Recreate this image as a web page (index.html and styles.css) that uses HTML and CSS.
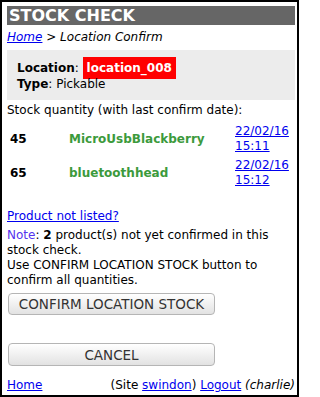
FILE: index.html
```html
<!DOCTYPE html>
<html>
<head>
<meta charset="utf-8">
<link rel="stylesheet" href="styles.css">
</head>
<body>
<div class="page">
  <h1 class="title">STOCK CHECK</h1>
  <div class="crumbs"><a href="#">Home</a> &gt; Location Confirm</div>
  <div class="locbox">
    <div><b>Location</b>: <span class="badge">location_008</span></div>
    <div><b>Type</b>: Pickable</div>
  </div>
  <div class="label">Stock quantity (with last confirm date):</div>
  <table class="stock">
    <tr>
      <td class="qty">45</td>
      <td class="name">MicroUsbBlackberry</td>
      <td class="date"><a href="#">22/02/16<br>15:11</a></td>
    </tr>
    <tr>
      <td class="qty">65</td>
      <td class="name">bluetoothhead</td>
      <td class="date"><a href="#">22/02/16<br>15:12</a></td>
    </tr>
  </table>
  <div class="notlisted"><a href="#">Product not listed?</a></div>
  <div class="note"><span class="notelabel">Note</span>: <b>2</b> product(s) not yet confirmed in this<br>stock check.<br>Use CONFIRM LOCATION STOCK button to confirm all quantities.</div>
  <button class="btn confirm">CONFIRM LOCATION STOCK</button>
  <button class="btn cancel">CANCEL</button>
  <div class="footer">
    <a href="#">Home</a>
    <span class="right">(Site <a href="#">swindon</a>) <a href="#">Logout</a> <i>(charlie)</i></span>
  </div>
</div>
</body>
</html>
```
FILE: styles.css
```css
html, body {
  margin: 0;
  padding: 0;
  background: #fff;
}
body {
  font-family: "DejaVu Sans", Verdana, sans-serif;
  font-size: 12px;
  color: #000;
}
.page {
  width: 299px;
  height: 397px;
  box-sizing: border-box;
  border: 2px solid #000;
  padding: 4px 2px 0 5px;
  display: flex;
  flex-direction: column;
}
a { color: #0000ee; }
.title {
  margin: 0;
  background: #666;
  color: #fff;
  font-size: 16px;
  font-weight: bold;
  line-height: 19px;
  padding: 0 2px;
}
.crumbs {
  font-style: italic;
  margin-top: 5px;
  line-height: 15px;
}
.locbox {
  background: #ececec;
  margin-top: 5px;
  padding: 10px 10px 8px 10px;
  font-size: 12px;
  line-height: 16px;
  height: 32px;
}
.badge {
  background: #f00;
  color: #fff;
  font-weight: bold;
  padding: 4px 4px;
}
.label {
  margin-top: 3px;
  line-height: 15px;
}
.stock {
  width: 100%;
  margin-top: 3px;
  border-collapse: separate;
  border-spacing: 2px;
  line-height: 15px;
}
.stock td {
  padding: 1px;
  vertical-align: middle;
}
.qty {
  font-weight: bold;
  width: 55px;
}
.name {
  font-weight: bold;
  color: #3c9a3c;
}
.date {
  width: 57px;
}
.notlisted {
  margin-top: 18px;
  line-height: 15px;
}
.note {
  margin-top: 4px;
  line-height: 15px;
}
.notelabel {
  color: #5533ee;
}
.btn {
  display: block;
  width: 207px;
  height: 22px;
  margin-left: 1px;
  padding: 0;
  border: 1px solid #b5b5b5;
  border-radius: 4px;
  background: linear-gradient(#ffffff, #e2e2e2);
  color: #333;
  font-family: "DejaVu Sans", Verdana, sans-serif;
  font-size: 13.5px;
}
.confirm {
  margin-top: 5px;
}
.cancel {
  margin-top: 28px;
  height: 23px;
}
.footer {
  margin-top: auto;
  margin-bottom: 2px;
  display: flex;
  justify-content: space-between;
  line-height: 15px;
}
.right i { font-style: italic; }
```
